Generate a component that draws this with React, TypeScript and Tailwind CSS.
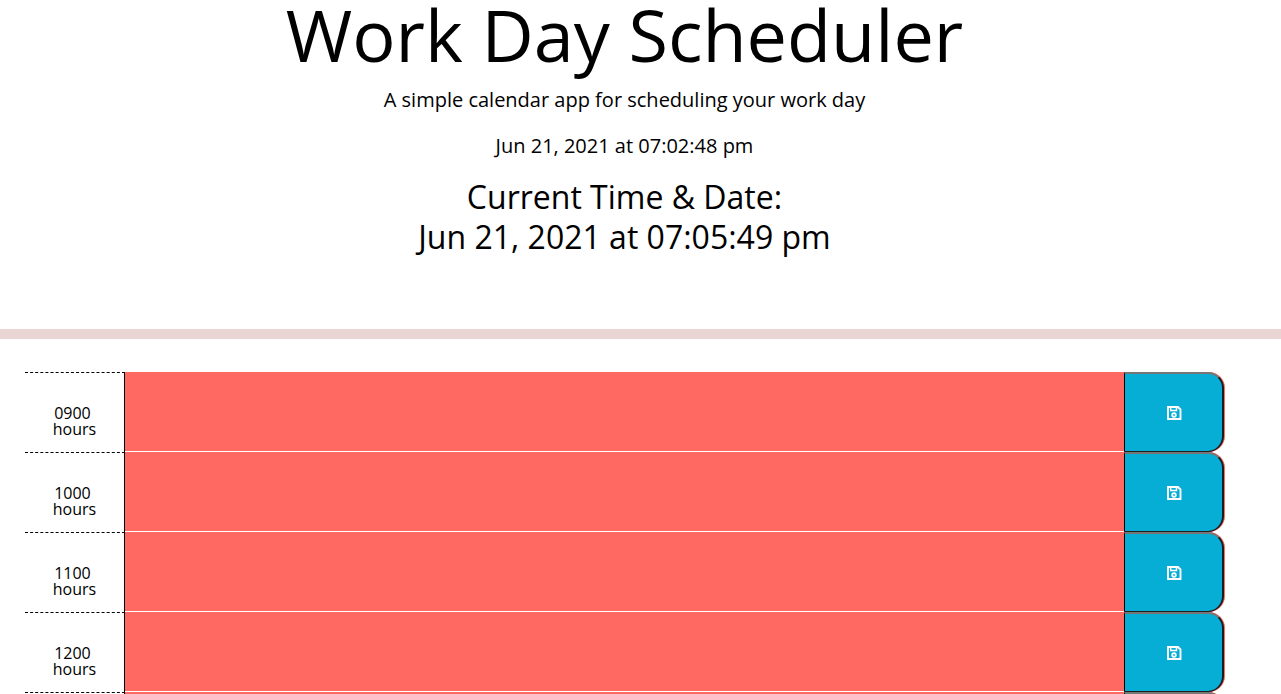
import React from "react";

const hours = ["0900", "1000", "1100", "1200", "1300", "1400", "1500", "1600", "1700"];

function SaveIcon() {
  return (
    <svg width="17" height="15" viewBox="0 0 17 15" fill="none" stroke="currentColor" aria-hidden="true">
      <path d="M3 2H13L15.5 4.5V14H3Z" strokeWidth="1.9" />
      <path d="M5.7 2V5.6H11.5V2" strokeWidth="1.5" />
      <circle cx="9" cy="10" r="1.8" strokeWidth="1.8" />
    </svg>
  );
}

function TimeBlock({ hour }: { hour: string }) {
  const id = `task-${hour}`;
  return (
    <div className="flex h-20">
      <label
        htmlFor={id}
        className="w-[100px] shrink-0 border-t border-r border-t-black border-r-black [border-top-style:dashed] pt-8 text-center text-base leading-4"
      >
        {hour}&nbsp;
        <br />
        hours
      </label>
      <textarea
        id={id}
        className="block h-20 min-w-0 flex-1 resize-none border-b border-white bg-[#ff6961] p-2 text-white outline-none"
      />
      <div className="w-[101px] shrink-0 rounded-r-2xl bg-[#ff6961] pr-px">
        <button
          type="button"
          aria-label={`Save ${hour} hours`}
          className="flex h-20 w-full items-center justify-center rounded-r-2xl border-t-2 border-r-2 border-b border-l border-t-[#767676] border-r-[#1c1c1c] border-b-[#1c1c1c] border-l-black bg-[#06aed5] text-white"
        >
          <SaveIcon />
        </button>
      </div>
    </div>
  );
}

export default function App() {
  return (
    <div className="h-screen overflow-x-hidden overflow-y-auto bg-white font-['Open_Sans',sans-serif] font-normal text-black [scrollbar-width:none]">
      <header className="border-b-10 border-[#ead5d5] pr-8 pb-[72px] text-center">
        <h1 className="mb-[17px] text-7xl leading-[68px] font-normal">Work Day Scheduler</h1>
        <p className="mb-4 text-xl leading-[30px]">
          A simple calendar app for scheduling your work day
        </p>
        <p className="mb-4 text-xl leading-[30px]">Jun 21, 2021 at 07:02:48 pm</p>
        <h2 className="text-[32px] leading-10">
          Current Time &amp; Date:
          <br />
          Jun 21, 2021 at 07:05:49 pm
        </h2>
      </header>
      <main className="pt-[33px] pr-14 pl-[25px]">
        {hours.map((hour) => (
          <TimeBlock key={hour} hour={hour} />
        ))}
      </main>
    </div>
  );
}
